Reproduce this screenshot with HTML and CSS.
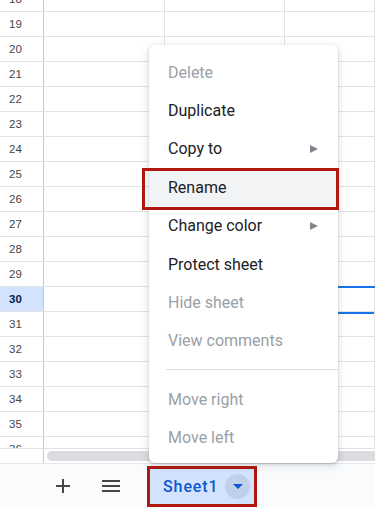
FILE: index.html
```html
<!DOCTYPE html>
<html lang="en">
<head>
    <meta charset="UTF-8">
    <meta name="viewport" content="width=device-width, initial-scale=1.0">
    <title>Sheet tab menu</title>
    <link rel="stylesheet" href="styles.css">
</head>
<body>
    <div class="sheet">
        <div class="grid">
            <div class="rows">
                <div class="row"><div class="rh">18</div><div class="cell"></div><div class="cell"></div><div class="cell"></div></div>
                <div class="row"><div class="rh">19</div><div class="cell"></div><div class="cell"></div><div class="cell"></div></div>
                <div class="row"><div class="rh">20</div><div class="cell"></div><div class="cell"></div><div class="cell"></div></div>
                <div class="row"><div class="rh">21</div><div class="cell"></div><div class="cell"></div><div class="cell"></div></div>
                <div class="row"><div class="rh">22</div><div class="cell"></div><div class="cell"></div><div class="cell"></div></div>
                <div class="row"><div class="rh">23</div><div class="cell"></div><div class="cell"></div><div class="cell"></div></div>
                <div class="row"><div class="rh">24</div><div class="cell"></div><div class="cell"></div><div class="cell"></div></div>
                <div class="row"><div class="rh">25</div><div class="cell"></div><div class="cell"></div><div class="cell"></div></div>
                <div class="row"><div class="rh">26</div><div class="cell"></div><div class="cell"></div><div class="cell"></div></div>
                <div class="row"><div class="rh">27</div><div class="cell"></div><div class="cell"></div><div class="cell"></div></div>
                <div class="row"><div class="rh">28</div><div class="cell"></div><div class="cell"></div><div class="cell"></div></div>
                <div class="row"><div class="rh">29</div><div class="cell"></div><div class="cell"></div><div class="cell"></div></div>
                <div class="row row-active">
                    <div class="rh">30</div><div class="cell"></div><div class="cell"></div><div class="cell"></div>
                    <div class="selection"></div>
                </div>
                <div class="row"><div class="rh">31</div><div class="cell"></div><div class="cell"></div><div class="cell"></div></div>
                <div class="row"><div class="rh">32</div><div class="cell"></div><div class="cell"></div><div class="cell"></div></div>
                <div class="row"><div class="rh">33</div><div class="cell"></div><div class="cell"></div><div class="cell"></div></div>
                <div class="row"><div class="rh">34</div><div class="cell"></div><div class="cell"></div><div class="cell"></div></div>
                <div class="row"><div class="rh">35</div><div class="cell"></div><div class="cell"></div><div class="cell"></div></div>
                <div class="row"><div class="rh">36</div><div class="cell"></div><div class="cell"></div><div class="cell"></div></div>
            </div>
        </div>

        <div class="hscroll">
            <div class="hscroll-corner"></div>
            <div class="hscroll-track"><div class="hscroll-thumb"></div></div>
        </div>

        <div class="tabbar">
            <button class="tab-btn" aria-label="Add sheet">
                <svg width="14" height="14" viewBox="0 0 14 14"><path d="M7 0v14M0 7h14" stroke="#444746" stroke-width="2"/></svg>
            </button>
            <button class="tab-btn" aria-label="All sheets">
                <svg width="18" height="12" viewBox="0 0 18 12"><path d="M0 1h18M0 6h18M0 11h18" stroke="#444746" stroke-width="2"/></svg>
            </button>
            <div class="sheet-tab">
                <span class="sheet-name">Sheet1</span>
                <span class="tab-drop">
                    <svg width="10" height="5" viewBox="0 0 10 5"><polygon points="0,0 10,0 5,5" fill="#0b57d0"/></svg>
                </span>
            </div>
        </div>

        <div class="menu">
            <div class="menu-item disabled">Delete</div>
            <div class="menu-item">Duplicate</div>
            <div class="menu-item">Copy to <span class="sub-arrow"></span></div>
            <div class="menu-item hovered">Rename</div>
            <div class="menu-item">Change color <span class="sub-arrow"></span></div>
            <div class="menu-item">Protect sheet</div>
            <div class="menu-item disabled">Hide sheet</div>
            <div class="menu-item disabled">View comments</div>
            <div class="menu-divider"></div>
            <div class="menu-item disabled">Move right</div>
            <div class="menu-item disabled">Move left</div>
        </div>
    </div>
</body>
</html>
```

FILE: styles.css
```css
* {
    box-sizing: border-box;
    margin: 0;
    padding: 0;
}

body {
    background-color: #fff;
    font-family: Roboto, 'Liberation Sans', Arial, sans-serif;
    overflow: hidden;
}

.sheet {
    position: relative;
    width: 375px;
    height: 508px;
    overflow: hidden;
}

.grid {
    height: 448px;
    overflow: hidden;
}

.rows {
    margin-top: -13px;
}

.row {
    position: relative;
    display: grid;
    grid-template-columns: 44px 121px 120px 1fr;
    height: 25px;
    border-bottom: 1px solid #e1e3e3;
}

.rh {
    border-right: 1px solid #c4c7c5;
    padding-left: 9px;
    font-family: 'Liberation Sans', Arial, sans-serif;
    font-size: 11.5px;
    line-height: 24px;
    color: #444746;
}

.cell {
    border-right: 1px solid #e1e3e3;
}

.row-active .rh {
    background-color: #d3e3fd;
    color: #041e49;
    font-weight: bold;
}

.selection {
    position: absolute;
    left: 165px;
    right: -10px;
    top: -1px;
    bottom: -3px;
    border-top: 2px solid #1a73e8;
    border-bottom: 2px solid #1a73e8;
}

.hscroll {
    display: flex;
    height: 15px;
    border-top: 1px solid #e1e3e3;
}

.hscroll-corner {
    width: 44px;
    border-right: 1px solid #c4c7c5;
}

.hscroll-track {
    flex: 1;
    padding: 2px 0 2px 3px;
}

.hscroll-thumb {
    height: 10px;
    margin-right: -10px;
    background-color: #dadce0;
    border-radius: 5px;
}

.tabbar {
    display: flex;
    align-items: center;
    height: 45px;
    padding-left: 47px;
    gap: 16px;
    background-color: #f9fbfd;
    border-top: 1px solid #e3e5e8;
}

.tab-btn {
    display: flex;
    align-items: center;
    justify-content: center;
    width: 32px;
    height: 32px;
    background: none;
    border: none;
}

.sheet-tab {
    display: flex;
    align-items: center;
    justify-content: space-between;
    width: 104px;
    height: 35px;
    margin-left: 7px;
    padding: 0 4px 0 13px;
    background-color: #d3e3fd;
    outline: 3px solid #b0170e;
}

.sheet-name {
    font-size: 16px;
    font-weight: 500;
    letter-spacing: 0.9px;
    color: #0b57d0;
}

.tab-drop {
    display: flex;
    align-items: center;
    justify-content: center;
    width: 25px;
    height: 25px;
    border-radius: 50%;
    background-color: #c0d0ea;
}

.menu {
    position: absolute;
    left: 149px;
    top: 45px;
    width: 189px;
    padding: 8px 0 6px;
    background-color: #fff;
    border-radius: 6px;
    box-shadow: 0 1px 2px rgba(60,64,67,0.25), 0 2px 6px 2px rgba(60,64,67,0.12);
}

.menu-item {
    position: relative;
    display: flex;
    align-items: center;
    justify-content: space-between;
    height: 38.4px;
    padding: 0 20px 0 19px;
    font-size: 16px;
    color: #202124;
}

.menu-item.disabled {
    color: #9aa0a6;
}

.menu-item.hovered {
    background-color: #f1f3f4;
}

.menu-item.hovered::after {
    content: "";
    position: absolute;
    left: -7px;
    right: -1px;
    top: 0;
    bottom: -3px;
    border: 3px solid #b0170e;
}

.sub-arrow {
    width: 0;
    height: 0;
    border-top: 4.5px solid transparent;
    border-bottom: 4.5px solid transparent;
    border-left: 8px solid #80868b;
}

.menu-divider {
    height: 1px;
    margin: 9px 0 10px 17px;
    background-color: #dadce0;
}
```
